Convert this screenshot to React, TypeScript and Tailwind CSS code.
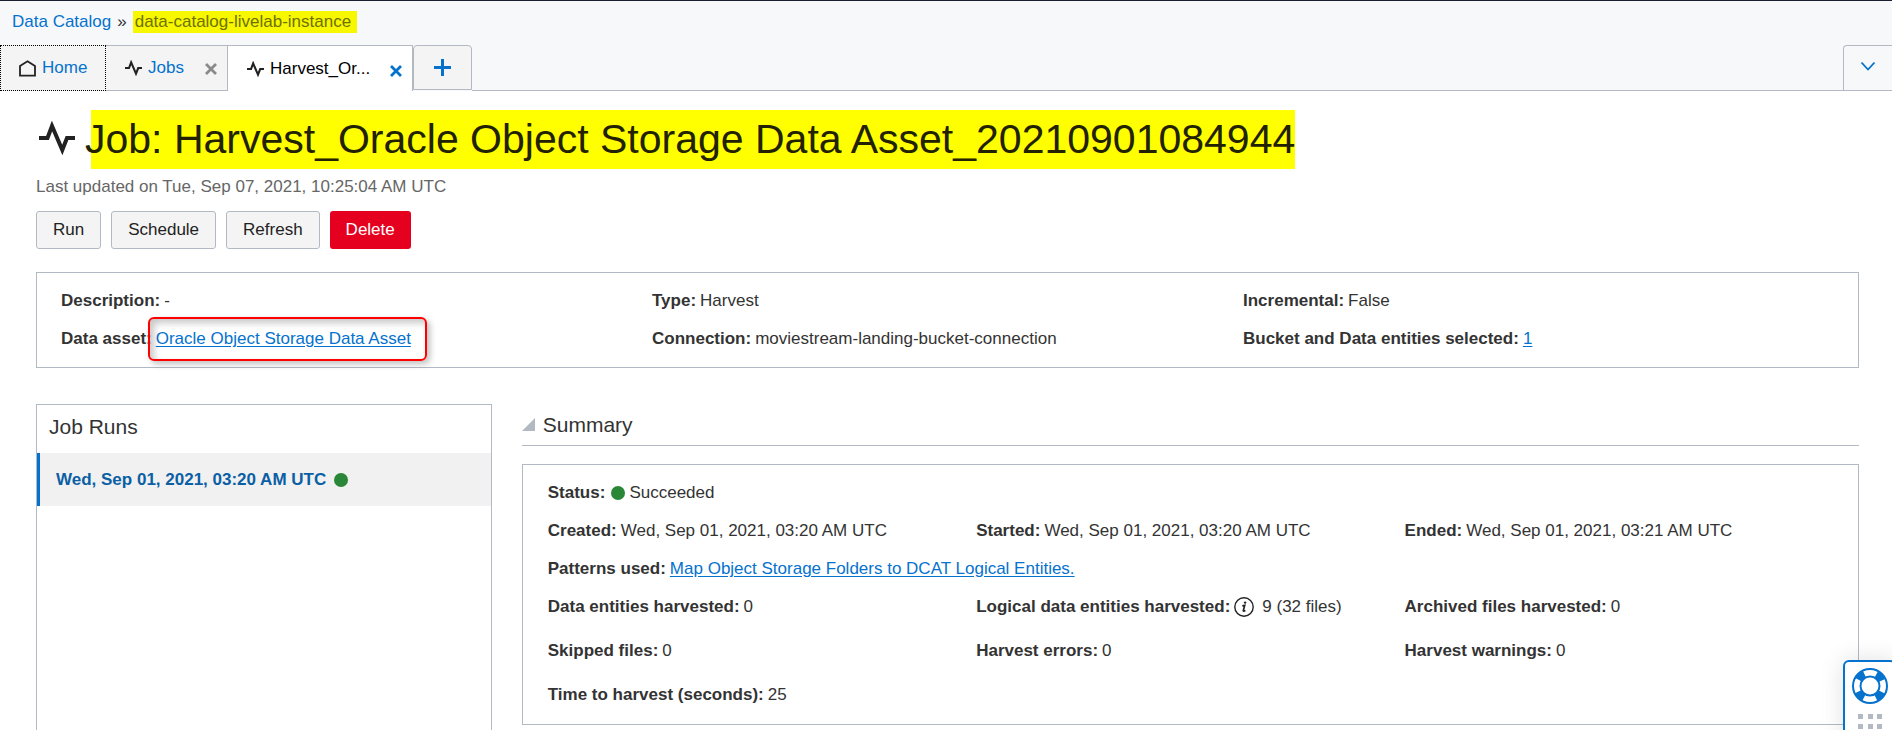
import type { ReactNode } from "react";

function ActivityIcon({ className, weight }: { className: string; weight: number }) {
  return (
    <svg viewBox="0 0 36 34" className={className} fill="none" stroke="#222" strokeWidth={weight} aria-hidden="true">
      <path d="M0 17H8.500L13 5L23.300 29L28 17H36" strokeMiterlimit="6" />
    </svg>
  );
}

function HomeIcon() {
  return (
    <svg viewBox="0 0 17 17" className="h-[17px] w-[17px]" fill="none" stroke="#222" strokeWidth="1.800" aria-hidden="true">
      <path d="M1 15.700V6L8.500 1.200L16 6V15.700Z" />
    </svg>
  );
}

function CloseIcon({ className }: { className: string }) {
  return (
    <svg viewBox="0 0 12 12" className={className} fill="none" stroke="currentColor" strokeWidth="2.800" aria-hidden="true">
      <path d="M1 1L11 11M11 1L1 11" />
    </svg>
  );
}

function LifebuoyIcon() {
  return (
    <svg viewBox="0 0 36 36" className="h-9 w-9" fill="none" stroke="#0572ce" aria-hidden="true">
      <circle cx="18" cy="18" r="13.300" strokeWidth="8" strokeDasharray="8.400 12.491" strokeDashoffset="-6.250" />
      <circle cx="18" cy="18" r="17" strokeWidth="2" />
      <circle cx="18" cy="18" r="9.500" strokeWidth="2" />
    </svg>
  );
}

function InfoIcon() {
  return (
    <svg viewBox="0 0 20 20" className="h-5 w-5" fill="none" stroke="#222" aria-hidden="true">
      <circle cx="10" cy="10" r="9.200" strokeWidth="1.400" />
      <circle cx="11.100" cy="5.600" r="1.200" fill="#222" stroke="none" />
      <path d="M8.300 8.900L10.700 8.400L9.300 13.600Q9.100 14.700 11.400 13.600" strokeWidth="1.700" />
    </svg>
  );
}

function Field({ label, children, className = "" }: { label: string; children: ReactNode; className?: string }) {
  return (
    <div className={`flex items-center gap-1 whitespace-nowrap ${className}`}>
      <dt className="font-bold">{label}:</dt>
      <dd className="flex items-center">{children}</dd>
    </div>
  );
}

function Dot({ className }: { className: string }) {
  return <span className={`inline-block h-3.5 w-3.5 rounded-full bg-[#2b8738] ${className}`} />;
}

const actionClass = "h-[38px] rounded-[3px] border border-[#b3b9c3] bg-[#f4f4f4] px-4 text-[#222]";
const linkClass = "text-[#0572ce] underline underline-offset-2";

export default function App() {
  return (
    <div className="relative flex h-screen flex-col overflow-hidden bg-white font-['Liberation_Sans',Arial,sans-serif] text-[17px] leading-6 text-[#333]">
      <header className="border-t border-[#1b2030] bg-[#f7f8fa]">
        <nav aria-label="Breadcrumb" className="flex h-11 items-center pb-0.5 pl-3">
          <a href="#catalog" className="text-[#0572ce]">Data Catalog</a>
          <span className="mx-1.5 text-[#333]">»</span>
          <span className="bg-[#f7f800] pr-1.5 pl-0.5 leading-[22px] text-[#6f7000]">data-catalog-livelab-instance</span>
        </nav>
        <div className="flex h-[46px]">
          <a href="#home" className="flex w-[106px] items-center gap-1.5 border border-dotted border-black bg-[#f4f4f4] pl-[18px] text-[#0572ce]">
            <HomeIcon />
            Home
          </a>
          <div className="flex w-[122px] items-center border-y border-r border-[#b3b9c3] bg-[#f4f4f4] pl-[19px]">
            <ActivityIcon className="h-4 w-[17px]" weight={4.4} />
            <a href="#jobs" className="ml-1.5 text-[#0572ce]">Jobs</a>
            <button aria-label="Close Jobs" className="mr-2.5 ml-auto pt-px text-[#8a8a8a]">
              <CloseIcon className="h-3 w-3" />
            </button>
          </div>
          <div className="flex w-[185px] items-center border-t border-r border-[#b3b9c3] bg-white pl-[19px]">
            <ActivityIcon className="h-4 w-[17px]" weight={4.4} />
            <a href="#job" className="ml-1.5 text-black">Harvest_Or...</a>
            <button aria-label="Close job" className="mr-2.5 ml-auto pt-1 text-[#0572ce]">
              <CloseIcon className="h-3 w-3" />
            </button>
          </div>
          <button aria-label="Add tab" className="flex h-[45px] w-[59px] items-center justify-center rounded-t border border-[#b3b9c3] bg-[#f4f4f4] pb-px text-[#0572ce]">
            <svg viewBox="0 0 17 17" className="h-[17px] w-[17px]" stroke="currentColor" strokeWidth="3" aria-hidden="true">
              <path d="M8.500 0V17M0 8.500H17" />
            </svg>
          </button>
          <div className="flex-1 border-b border-[#b3b9c3]" />
          <button aria-label="Show all tabs" className="flex w-[49px] items-center justify-center rounded-tl border-t border-b border-l border-[#b3b9c3] pb-1 text-[#0572ce]">
            <svg viewBox="0 0 14 9" className="h-[9px] w-3.5" fill="none" stroke="currentColor" strokeWidth="1.700" aria-hidden="true">
              <path d="M0.500 0.500L7 7.500L13.500 0.500" />
            </svg>
          </button>
        </div>
      </header>

      <main className="flex min-h-0 flex-1 flex-col pr-[33px] pl-9">
        <div className="mt-[19px] flex h-[59px] items-center">
          <ActivityIcon className="mb-1 ml-[3px] h-[34px] w-9" weight={4} />
          <h1 className="ml-4 bg-[#ff0] text-[41px] leading-[59px] -indent-1.5 whitespace-nowrap text-[#222200]">
            Job: Harvest_Oracle Object Storage Data Asset_20210901084944
          </h1>
        </div>
        <p className="mt-1.5 text-[#666]">Last updated on Tue, Sep 07, 2021, 10:25:04 AM UTC</p>
        <div className="mt-3 flex gap-2.5">
          <button className={actionClass}>Run</button>
          <button className={actionClass}>Schedule</button>
          <button className={actionClass}>Refresh</button>
          <button className="h-[38px] rounded-[3px] bg-[#e6001f] px-4 text-white">Delete</button>
        </div>

        <dl className="mt-[23px] grid shrink-0 auto-rows-[38px] grid-cols-3 border border-[#b3b9c3] px-6 py-[9px]">
          <Field label="Description">-</Field>
          <Field label="Type">Harvest</Field>
          <Field label="Incremental">False</Field>
          <Field label="Data asset">
            <span className="relative">
              <span className="pointer-events-none absolute -inset-x-2 -inset-y-2.5 -right-4 rounded-md border-2 border-[#f00] shadow-[3px_3px_6px_rgba(0,0,0,0.25),inset_4px_4px_7px_rgba(0,0,0,0.22)]" />
              <a href="#asset" className={linkClass}>Oracle Object Storage Data Asset</a>
            </span>
          </Field>
          <Field label="Connection">moviestream-landing-bucket-connection</Field>
          <Field label="Bucket and Data entities selected">
            <a href="#selected" className={linkClass}>1</a>
          </Field>
        </dl>

        <div className="mt-9 flex flex-1 gap-[30px]">
          <aside className="w-1/4 border border-b-0 border-[#b3b9c3]">
            <h2 className="h-12 pl-3 text-[21px] leading-[44px]">Job Runs</h2>
            <a href="#run" className="flex h-[53px] items-center border-l-[3px] border-[#0572ce] bg-[#f1f1f1] pl-4 font-bold text-[#0b5fa5]">
              Wed, Sep 01, 2021, 03:20 AM UTC
              <Dot className="ml-2" />
            </a>
          </aside>
          <section className="flex-1">
            <button aria-expanded="true" className="flex h-[42px] w-full items-center gap-2 border-b border-[#b3b9c3] text-left text-[21px]">
              <svg viewBox="0 0 13 13" className="h-[13px] w-[13px]" aria-hidden="true">
                <path d="M13 0V13H0Z" fill="#b3b9c3" />
              </svg>
              Summary
            </button>
            <dl className="mt-[18px] grid grid-cols-3 grid-rows-[38px_38px_38px_41px_44px_44px] border border-[#b3b9c3] px-[25px] pt-[9px] pb-[7px]">
              <Field label="Status" className="col-span-3">
                <Dot className="mr-1 ml-0.5" />
                Succeeded
              </Field>
              <Field label="Created">Wed, Sep 01, 2021, 03:20 AM UTC</Field>
              <Field label="Started">Wed, Sep 01, 2021, 03:20 AM UTC</Field>
              <Field label="Ended">Wed, Sep 01, 2021, 03:21 AM UTC</Field>
              <Field label="Patterns used" className="col-span-3">
                <a href="#pattern" className={linkClass}>Map Object Storage Folders to DCAT Logical Entities.</a>
              </Field>
              <Field label="Data entities harvested" className="h-[38px]">0</Field>
              <Field label="Logical data entities harvested" className="h-[38px]">
                <button aria-label="About logical data entities" className="mr-2">
                  <InfoIcon />
                </button>
                9 (32 files)
              </Field>
              <Field label="Archived files harvested" className="h-[38px]">0</Field>
              <Field label="Skipped files">0</Field>
              <Field label="Harvest errors">0</Field>
              <Field label="Harvest warnings">0</Field>
              <Field label="Time to harvest (seconds)" className="col-span-3">25</Field>
            </dl>
          </section>
        </div>
      </main>

      <button aria-label="Help" className="absolute -right-1 -bottom-4 flex h-[86px] w-[53px] flex-col items-center rounded-md border-2 border-[#0572ce] bg-white pt-1.5 shadow-[0_0_24px_rgba(0,0,0,0.12)]">
        <LifebuoyIcon />
        <svg viewBox="0 0 24 24" className="mt-2.5 h-6 w-6" fill="#b3b9c3" aria-hidden="true">
          <path d="M0 0h5v5H0zM10 0h5v5h-5zM19 0h5v5h-5zM0 10h5v5H0zM10 10h5v5h-5zM19 10h5v5h-5z" />
        </svg>
      </button>
    </div>
  );
}
